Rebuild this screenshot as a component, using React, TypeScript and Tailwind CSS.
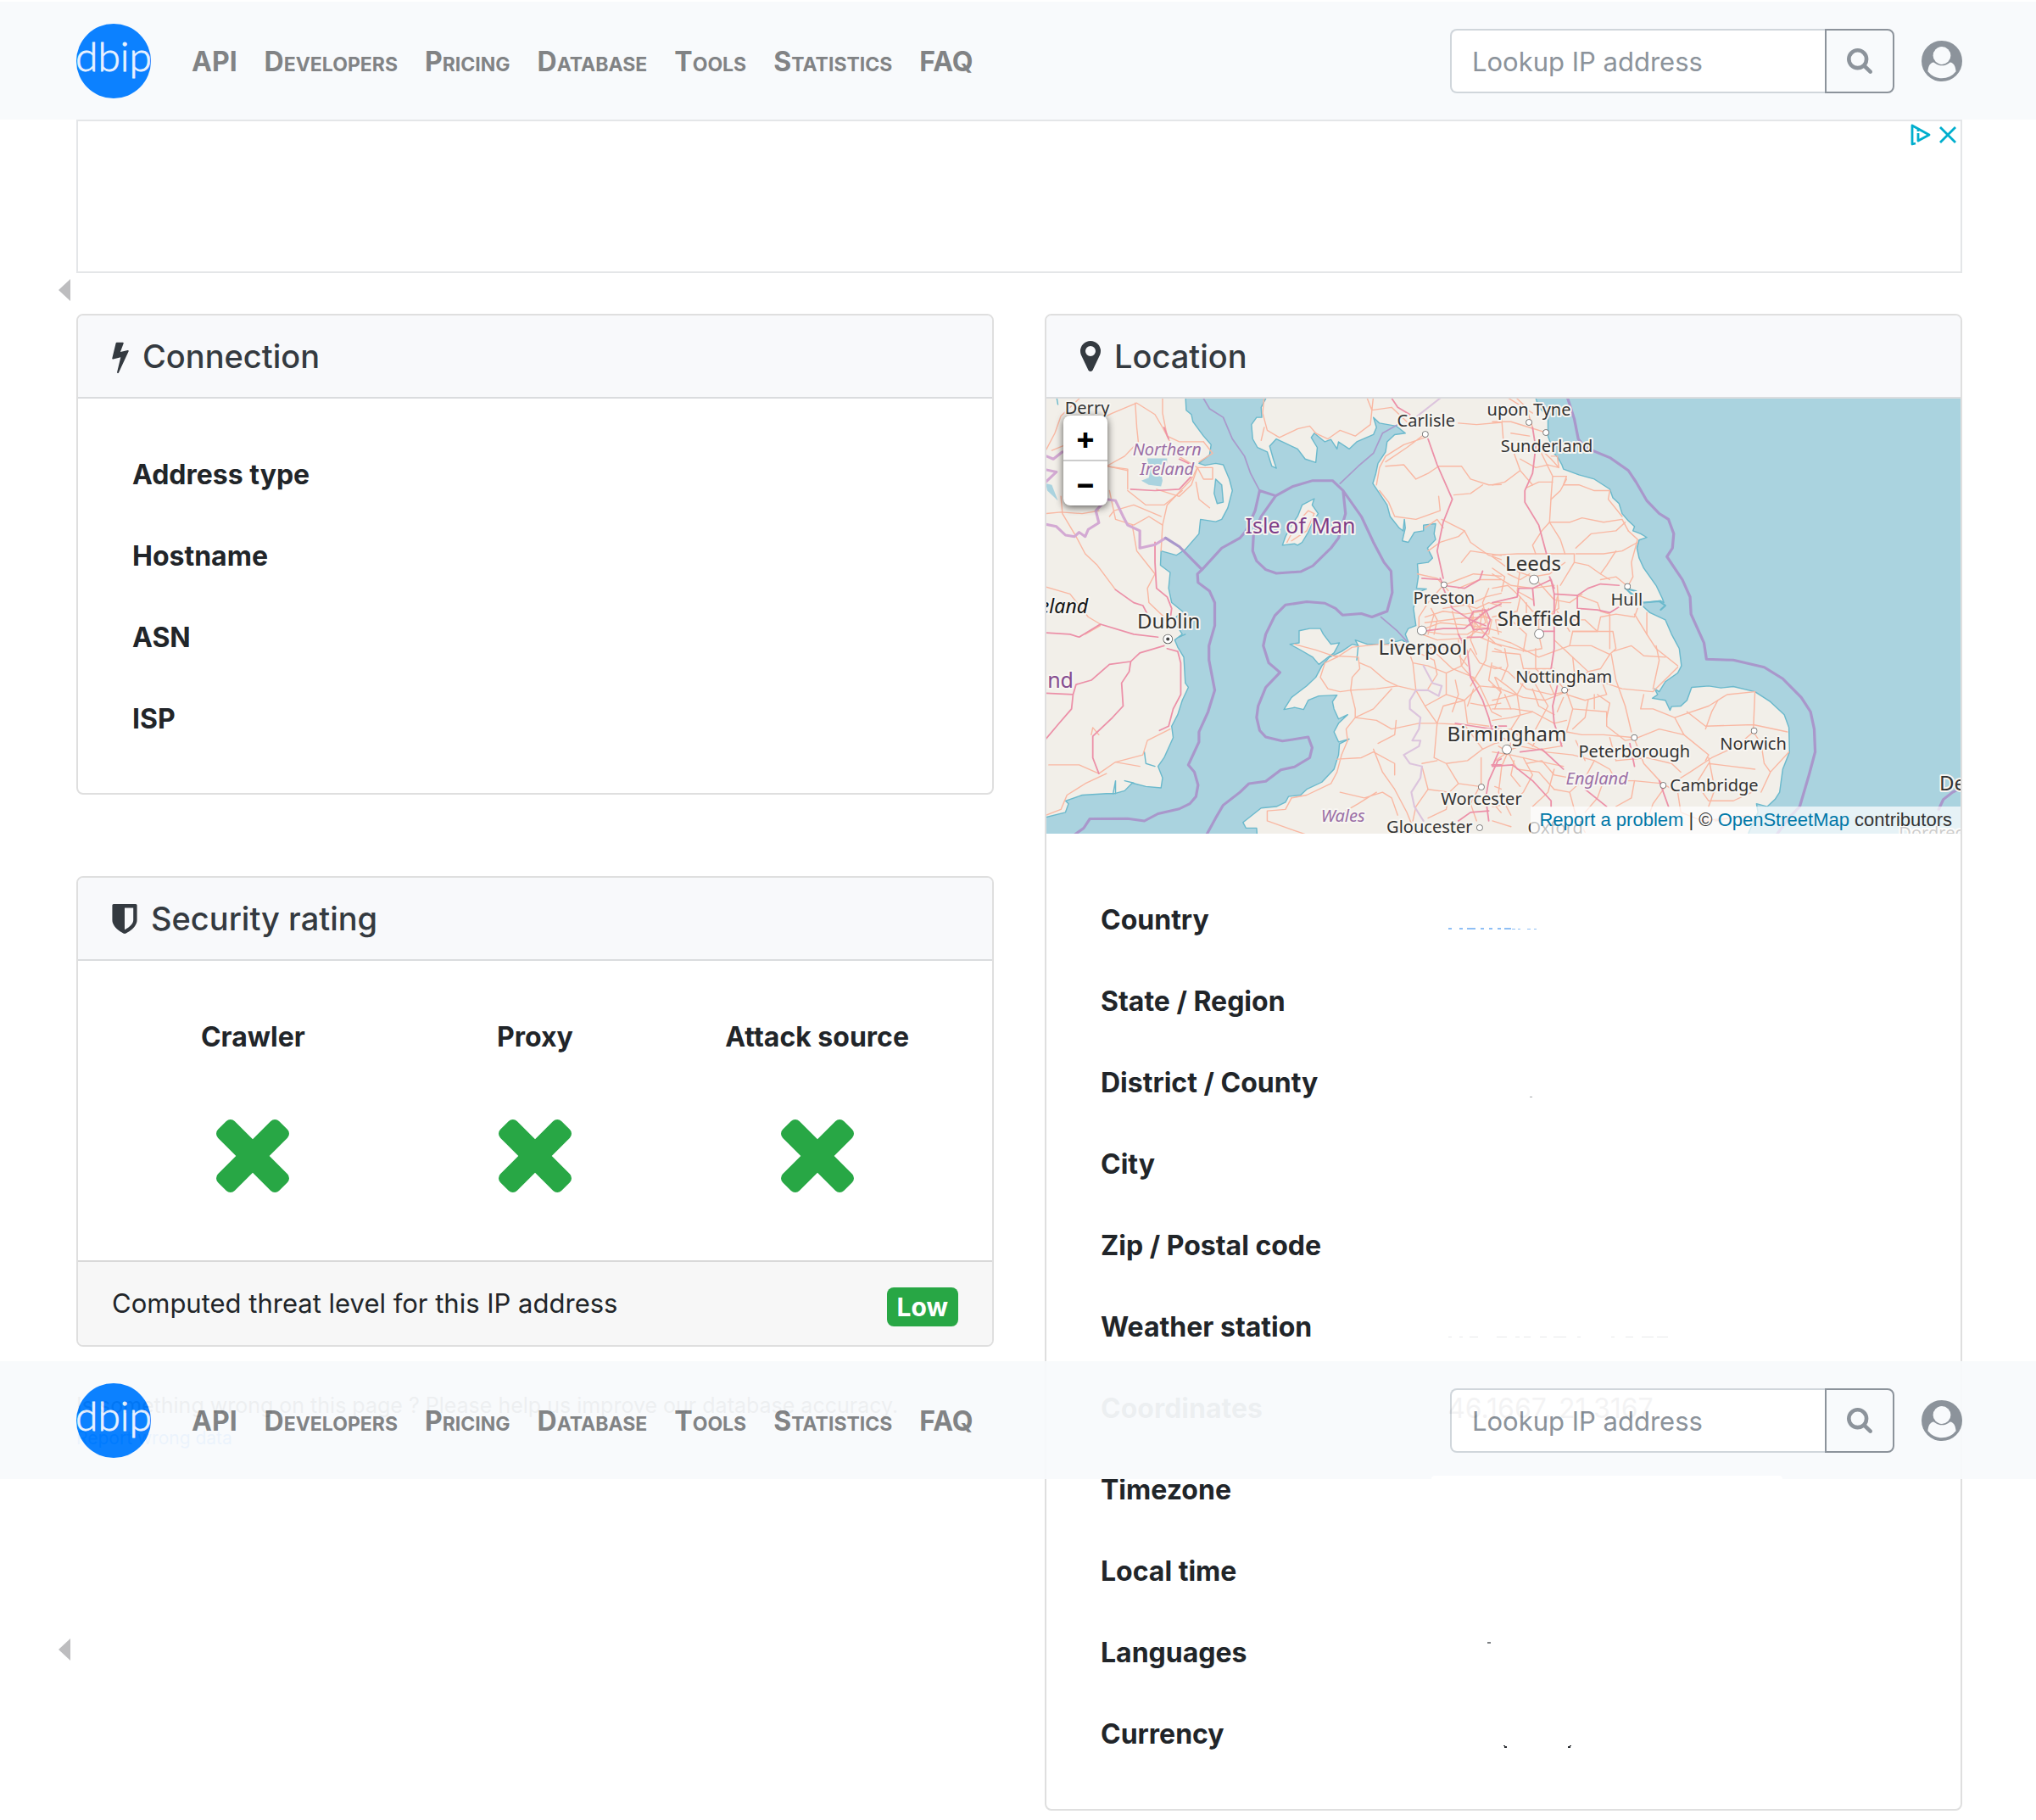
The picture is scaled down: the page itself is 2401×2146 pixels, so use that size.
import { ReactNode } from "react";

const navItems = ["API", "Developers", "Pricing", "Database", "Tools", "Statistics", "FAQ"];

const connectionRows = ["Address type", "Hostname", "ASN", "ISP"];

type Trace = { color: string; rects: number[][] };

// Leftovers of the masked values: [x, y, width, height] inside a 96px row
const traces: Record<string, Trace> = {
  Country: {
    color: "#8fbff5",
    rects: [[1, 57, 4, 2], [14, 57, 4, 2], [23, 57, 10, 2], [39, 57, 4, 2], [49, 57, 4, 2], [59, 57, 4, 2], [67, 57, 8, 2], [76, 58, 4, 1], [83, 58, 3, 1], [94, 58, 4, 1], [102, 58, 3, 1]],
  },
  "District / County": { color: "#a5a8ab", rects: [[97, 64, 3, 1]] },
  "Weather station": {
    color: "#e8e9ea",
    rects: [[1, 59, 4, 1], [14, 59, 4, 1], [26, 59, 10, 1], [58, 59, 12, 1], [80, 59, 5, 1], [90, 59, 8, 1], [109, 59, 8, 1], [125, 59, 15, 1], [153, 59, 4, 1], [193, 59, 4, 1], [210, 59, 9, 1], [229, 59, 14, 1], [247, 59, 13, 1]],
  },
  Languages: { color: "#7b7e82", rects: [[47, 35, 4, 2]] },
  Currency: { color: "#2b2f33", rects: [[66, 61, 2, 1], [67, 62, 3, 2], [144, 61, 2, 1], [142, 62, 3, 2]] },
};

const locationRows = [
  "Country",
  "State / Region",
  "District / County",
  "City",
  "Zip / Postal code",
  "Weather station",
  "Coordinates",
  "Timezone",
  "Local time",
  "Languages",
  "Currency",
];

function BoltIcon() {
  return (
    <svg viewBox="448 0 896 1792" className="h-[39px] w-[20px]" fill="currentColor" aria-hidden="true">
      <path d="M1333 566q18 20 7 44l-540 1157q-13 25-42 25-4 0-14-2-17-5-25.5-19t-4.5-30l197-808-406 101q-4 1-12 1-18 0-31-11-18-15-13-39l201-825q4-16 18-26t28-10h328q19 0 32 12.5t13 29.5q0 8-5 18l-171 463 396-98q8-2 12-2 19 0 34 15z" />
    </svg>
  );
}

function MarkerIcon() {
  return (
    <svg viewBox="384 128 1024 1536" className="h-[36px] w-[24px]" fill="currentColor" aria-hidden="true">
      <path d="M1152 640q0-106-75-181t-181-75-181 75-75 181 75 181 181 75 181-75 75-181zm256 0q0 109-33 179l-364 774q-16 33-47.5 52t-67.5 19-67.5-19-46.5-52l-365-774q-33-70-33-179 0-212 150-362t362-150 362 150 150 362z" />
    </svg>
  );
}

function ShieldIcon() {
  return (
    <svg viewBox="256 128 1280 1536" className="h-[35px] w-[30px]" fill="currentColor" aria-hidden="true">
      <path d="M1344 960v-640h-448v1137q119-63 213-137 235-184 235-360zm192-768v768q0 86-33.5 170.5t-83 150-118 127.5-126.5 103-121 77.5-89.5 49.5-42.5 20q-12 6-26 6t-26-6q-16-7-42.5-20t-89.5-49.5-121-77.5-126.5-103-118-127.5-83-150-33.5-170.5v-768q0-26 19-45t45-19h1152q26 0 45 19t19 45z" />
    </svg>
  );
}

function CrossIcon() {
  return (
    <svg viewBox="110 366 1188 1188" className="h-[86px] w-[86px] text-[#28a745]" fill="currentColor" role="img" aria-label="No">
      <path d="M1298 1322q0 40-28 68l-136 136q-28 28-68 28t-68-28l-294-294-294 294q-28 28-68 28t-68-28l-136-136q-28-28-28-68t28-68l294-294-294-294q-28-28-28-68t28-68l136-136q28-28 68-28t68 28l294 294 294-294q28-28 68-28t68 28l136 136q28 28 28 68t-28 68l-294 294 294 294q28 28 28 68z" />
    </svg>
  );
}

function SearchIcon() {
  return (
    <svg viewBox="0 128 1664 1664" className="h-[30px] w-[30px]" fill="currentColor" aria-hidden="true">
      <path d="M1152 832q0-185-131.5-316.5t-316.5-131.5-316.5 131.5-131.5 316.5 131.5 316.5 316.5 131.5 316.5-131.5 131.5-316.5zm512 832q0 52-38 90t-90 38q-54 0-90-38l-343-342q-179 124-399 124-143 0-273.5-55.5t-225-150-150-225-55.5-273.5 55.5-273.5 150-225 225-150 273.5-55.5 273.5 55.5 225 150 150 225 55.5 273.5q0 220-124 399l343 343q37 37 37 90z" />
    </svg>
  );
}

function Navbar({ id }: { id: string }) {
  return (
    <header className="flex h-[139px] items-center bg-[#f8fafc] pl-[90px] pr-[87px] opacity-95">
      <a href="#" aria-label="dbip">
        <svg viewBox="0 0 88 88" className="h-[88px] w-[88px]">
          <clipPath id={`logo-${id}`}>
            <circle cx="44" cy="44" r="44" />
          </clipPath>
          <g clipPath={`url(#logo-${id})`}>
            <rect width="88" height="88" fill="#007bff" />
            <text x="44" y="56" textAnchor="middle" fontFamily="Lato, sans-serif" fontWeight="300" fontSize="48" fill="#e8f2ff" stroke="#e8f2ff" strokeWidth="0.8">
              dbip
            </text>
          </g>
        </svg>
      </a>
      <nav className="ml-12 flex flex-1 items-baseline gap-8 pt-1.5 leading-[48px] font-bold text-[#7b7d7f]">
        {navItems.map((item) =>
          item === item.toUpperCase() ? (
            <a key={item} href="#" className="block text-[32px]">{item}</a>
          ) : (
            <a key={item} href="#" className="block text-[23px] uppercase first-letter:text-[32px]">{item}</a>
          )
        )}
      </nav>
      <form className="flex h-[76px] w-[524px]">
        <input
          type="text"
          aria-label="Lookup IP address"
          placeholder="Lookup IP address"
          className="min-w-0 flex-1 rounded-l-lg border-2 border-r-0 border-[#ced4da] bg-white px-6 pt-1 text-[31px] text-[#868e96] placeholder:text-[#868e96]"
        />
        <button type="submit" aria-label="Search" className="flex w-[82px] items-center justify-center rounded-r-lg border-2 border-[#868e96] text-[#868e96]">
          <SearchIcon />
        </button>
      </form>
      <a href="#" aria-label="Account" className="ml-8">
        <svg viewBox="0 0 48 48" className="h-12 w-12">
          <circle cx="24" cy="24" r="24" fill="#868e96" />
          <circle cx="24" cy="17.5" r="10.4" fill="#f8fafc" />
          <path d="M14.3 25.4Q24 33.2 33.7 25.4C37.8 26 40 29.5 40.6 36.2A21 21 0 0 1 7.4 36.2C8 29.5 10.2 26 14.3 25.4Z" fill="#f8fafc" />
        </svg>
      </a>
    </header>
  );
}

function CardTitle({ icon, children }: { icon: ReactNode; children: ReactNode }) {
  return (
    <div className="flex h-[98px] items-center gap-4 border-b-2 border-[#dadcde] bg-[#f8f9fb] px-10 text-[#343a40]">
      {icon}
      <h2 className="text-[38px] leading-[48px] font-medium">{children}</h2>
    </div>
  );
}

function InfoTable({ rows }: { rows: string[] }) {
  return (
    <table className="w-full table-fixed text-[32px] leading-[48px]">
      <tbody>
        {rows.map((row) => (
          <tr key={row} className="h-24">
            <th scope="row" className="w-[41%] px-6 text-left font-bold">{row}</th>
            <td className="p-0 pl-6">
              {row === "Coordinates" && "46.1667, 21.3167"}
              {traces[row] && (
                <svg viewBox="0 0 300 96" className="h-24 w-[300px]" fill={traces[row].color} aria-hidden="true">
                  {traces[row].rects.map(([x, y, w, h], i) => (
                    <rect key={i} x={x} y={y} width={w} height={h} />
                  ))}
                </svg>
              )}
            </td>
          </tr>
        ))}
      </tbody>
    </table>
  );
}

// Coast of Great Britain, western half and eastern half
const westCoast =
  "M775 10L750 60 752 95 735 95 718 120 722 170 738 200 770 215 785 265 800 272 790 240 778 195 800 170 830 185 870 205 895 240 930 252 935 200 915 165 925 150 960 180 980 172 1000 205 1005 180 1040 205 1065 180 1120 155 1130 130 1120 95 1140 115 1195 125 1225 150 1190 155 1165 180 1160 215 1135 255 1128 290 1118 325 1140 360 1165 400 1175 440 1205 480 1218 490 1222 450 1225 480 1215 525 1235 530 1255 495 1285 490 1285 470 1325 465 1320 500 1325 520 1298 550 1315 585 1300 600 1265 605 1268 650 1262 690 1295 692 1265 705 1252 760 1260 820 1235 830 1225 850 1240 890 1215 870 1160 885 1100 885 1060 870 1070 890 1050 885 1015 910 975 930 950 960 930 1000 900 1030 850 1070 825 1112 860 1105 890 1112 905 1080 940 1065 1000 1062 985 1085 990 1110 1005 1145 1035 1130 1005 1160 990 1190 1005 1225 1040 1215 1008 1232 1005 1270 990 1320 950 1365 900 1390 880 1410 840 1415 830 1435 800 1450 750 1455 690 1505 700 1525 735 1525 740 1600";
const eastCoast =
  "M135 10L150 60 180 90 180 160 200 220 212 235 225 260 230 275 280 295 330 310 380 345 390 375 410 395 420 430 440 455 460 475 455 490 480 500 500 513 475 522 468 550 475 585 490 620 530 680 550 725 555 740 545 733 490 740 430 690 480 745 510 775 560 800 580 850 605 900 612 960 600 985 560 1015 540 1050 525 1040 535 1060 518 1073 560 1080 575 1115 580 1102 610 1100 630 1080 645 1035 700 1030 740 1037 780 1032 850 1050 900 1085 945 1130 960 1175 962 1260 940 1320 930 1400 915 1425 890 1450 855 1440 860 1470 830 1540 820 1600";
const irishCoast =
  "M500 10L503 70 520 85 525 110 560 160 585 190 580 225 545 255 565 262 600 255 625 260 645 310 655 350 640 410 620 450 600 458 550 450 545 500 500 555 470 575 420 560 418 610 450 635 445 690 455 740 490 770 460 800 490 850 465 870 475 895 495 930 500 1020 510 1035 490 1080 475 1130 455 1170 460 1210 430 1280 410 1310 425 1350 420 1385 370 1380 325 1368 300 1395 265 1405 240 1405 160 1410 105 1430 115 1440 105 1470 30 1490";
const anglesey = "M875 838L910 830 945 830 955 850 980 885 1008 880 990 915 970 930 940 955 920 930 880 905 845 885 875 880Z";
const isleOfMan = "M925 378L918 400 938 430 920 460 905 495 885 530 870 540 860 535 820 540 830 510 850 470 870 440 885 400Z";

const westPrimary = [
  "M60 210L130 180 180 120 260 80 340 45 400 85 425 130 440 160 480 180 560 180",
  "M425 20L425 80 440 160 470 225 540 270 520 310 440 400 425 470 420 560",
  "M335 45L340 130 345 180 300 230 240 265 310 275 310 345",
  "M40 210L70 150 90 90 150 30",
  "M245 265L310 280M405 345L480 370 520 330 540 270 590 270 590 310 560 310 540 270",
  "M535 320L545 380 580 410",
  "M250 350L270 450 330 470 380 440 425 470M250 440L265 420 330 400 420 440M310 350L370 400 430 400 490 350",
  "M40 430L90 425 160 430 215 420M90 370L95 430 140 510 170 570 210 610 270 695",
  "M325 470L340 560 400 640 375 690 380 740 440 800",
  "M40 685L120 710 180 790 220 815M220 820L170 850",
  "M560 180L590 220 545 250",
  "M50 1305L150 1305 215 1335 270 1295 360 1270 375 1220 450 1180",
  "M40 1480L90 1460 110 1410 170 1370 240 1335M270 1295L350 1310M190 1200L195 1175 215 1200",
  "M760 20L755 80 770 140 810 165 870 135 910 125 930 150M760 130L750 175",
  "M930 150L970 170 1010 140 1060 160 1110 120 1115 70 1100 30M1115 70L1180 60 1230 110M1120 20L1115 70",
  "M1290 165L1220 190 1160 230 1140 270 1130 330M1280 160L1230 200 1160 250M1160 265L1220 260 1260 310 1300 290 1335 265",
  "M1335 265L1410 265 1440 310 1500 330 1568 328M1385 365L1440 360 1480 330M1400 115L1460 120 1568 110",
  "M1140 350L1170 390 1190 440 1260 450 1340 420 1335 370M1345 450L1420 490 1440 530 1500 575 1568 600",
  "M1300 560L1340 530 1400 510 1420 490M1350 480L1330 450 1290 480",
  "M1265 640L1330 655 1350 680 1400 660 1450 640 1568 650M1350 680L1300 740 1270 790 1270 830",
  "M1400 690L1470 660 1540 660M1360 690L1400 740 1460 760 1500 740 1568 760M1410 600L1440 560 1568 580",
  "M1290 790L1350 770 1420 780 1480 770 1490 810 1430 850 1350 850 1290 840M1290 830L1340 810 1440 820 1500 830 1568 850",
  "M1460 800L1500 760M1440 790L1480 840 1520 880M1480 760L1470 830 1410 880M1320 780L1300 850M1380 770L1400 850M1500 690L1480 740 1500 830",
  "M860 885L930 905 1000 930 1050 895 1140 885 1230 890M985 925L1070 930 1075 970 1050 1000 1045 1045",
  "M1000 930L960 950 945 1000 970 1040 1010 1050 1045 1045M1045 1045L1130 1040 1200 1030 1260 1045M1075 950L1110 965 1160 1010 1200 1030",
  "M1045 1045L1060 1110 1060 1140 1130 1150 1180 1180 1270 1160M1060 1140L1030 1180 1035 1220M1180 1040L1120 1110 1060 1140",
  "M1035 1220L1015 1270 1000 1330 980 1370 900 1410 850 1420M1000 1285L1080 1280 1120 1260 1190 1300 1190 1340",
  "M1120 1250L1150 1330 1190 1390 1230 1470 1260 1548M1135 1230L1190 1200 1195 1150",
  "M850 1420L830 1460 770 1465 770 1500 850 1530 900 1548M1010 1400L1090 1420 1150 1400 1180 1420 1200 1480M1020 1470L1070 1440 1130 1400",
  "M1230 890L1250 950 1300 960 1360 985 1410 960 1440 900M1250 950L1260 1045 1290 1100 1330 1160M1360 985L1360 1060 1290 1100",
  "M1440 900L1470 950 1520 970 1568 960M1400 870L1410 960 1470 1030 1568 1040M1330 920L1380 970 1450 1000 1470 1030M1500 860L1490 940 1440 1030",
  "M1360 1060L1420 1080 1470 1030M1330 1160L1350 1100 1420 1080 1430 1160 1500 1170M1270 1160L1330 1160 1420 1165M1470 1030L1510 1120 1568 1150",
  "M1330 1160L1320 1280 1360 1300 1430 1290 1480 1250M1360 1300L1400 1370 1470 1380M1280 1300L1330 1290M1280 1310L1300 1390 1370 1400 1400 1370",
  "M1300 1390L1260 1450 1250 1500M1470 1380L1440 1440 1460 1500M1475 1280L1475 1380M1480 1250L1520 1230 1568 1220M1420 1165L1480 1250",
  "M1370 1400L1360 1460 1300 1490M1520 1380L1568 1400M1500 1420L1540 1470 1568 1480M1520 900L1568 920M1510 950L1500 1010 1568 1080",
  "M1310 760L1330 800 1320 850M1350 760L1440 745 1490 720 1568 700M1290 810L1400 795 1500 790M1280 850L1330 870 1400 865 1470 860 1560 900",
  "M1445 770L1455 820 1440 870 1460 920M1470 780L1510 800 1500 850 1450 840 1445 790M1420 730L1450 780M1300 900L1340 890 1390 910 1430 960",
  "M1280 920L1320 940 1330 990 1300 1040M1390 1010L1400 1060 1380 1120M1440 1090L1490 1100 1540 1090M1450 1040L1430 1100M1520 1000L1540 1050 1520 1110",
];

const westMotorway = [
  "M1180 28L1200 60 1240 85M1300 170L1330 260 1380 380 1350 460 1330 560 1350 655",
  "M1280 655L1340 660M1350 680L1420 690 1470 660 1480 630M1350 690L1380 760 1440 800 1490 820",
  "M1280 840L1350 830 1420 830 1490 770 1568 730M1400 850L1430 910 1440 1000 1480 1080 1500 1140 1510 1180",
  "M1510 1180L1450 1170 1390 1160M1510 1180L1568 1180M1568 1270L1530 1290 1500 1360 1490 1420 1500 1500",
  "M1400 1500L1440 1470 1500 1465M1430 860L1480 860 1500 830M1435 800L1450 770 1490 765 1505 800 1495 830 1450 835 1435 800",
  "M320 345L400 350 480 345 520 300 510 255 480 240",
  "M400 530L400 600 405 690 440 720 455 760 450 800",
  "M410 860L330 850 220 815 150 860 120 850 40 845M270 695L330 740 360 750 380 790",
  "M430 890L350 915 320 945 250 955 190 1010 140 1025 130 1060 40 1055M130 1060L125 1110 80 1165 40 1215",
  "M320 945L315 980 290 1020 295 1100 260 1140 195 1205 195 1280 215 1335",
  "M440 900L475 910 485 950 485 1060 460 1110 445 1170 415 1185",
  "M430 130L445 170M1510 1305L1568 1305M1340 655L1350 680",
];

const eastPrimary = [
  "M30 100L35 170 70 220 90 280 130 330M70 220L140 190M90 280L40 320 0 330M40 20L130 80M70 20L110 60 130 130",
  "M0 110L60 110 120 130 180 150M60 150L120 160M140 190L190 240 215 270 210 230 190 230M90 240L140 270 180 260 215 270",
  "M145 190L195 300 190 370 185 460 160 490 130 540 140 570M195 300L240 300 230 330 280 330 330 350 380 350 375 380 420 440",
  "M195 320L150 320 110 340M240 310L220 350 190 380M185 460L250 460 290 445 360 460 420 450 440 490",
  "M185 460L220 520 235 570M270 550L320 500 400 490 430 460M440 490L470 520 450 600 455 650 440 680",
  "M270 570L360 570 420 560 470 530M0 575L80 570 160 570 265 570 265 600 220 680M265 600L310 610 350 640 380 660",
  "M350 640L370 610 400 560M350 660L400 650 440 685M0 580L50 620 130 650 185 640 235 600",
  "M0 640L60 680 130 690 200 680M0 690L50 680 90 720 80 770 0 790M90 720L130 770 200 780 210 720",
  "M90 620L80 700 130 730M150 670L200 730 250 740 290 710M210 680L215 760 150 800 150 850M0 740L60 740",
  "M280 715L340 740 350 770 380 780 380 900M470 760L460 790 400 780 350 790 340 840 260 840M500 775L500 850 530 900 600 960",
  "M460 780L500 850M260 840L390 840 400 900 380 920M150 850L160 900 110 910 0 880M390 910L450 890 490 925 560 930",
  "M0 860L60 880 150 930 250 890 320 890 380 920 350 970 310 980 260 930M0 910L90 920 100 970 200 970",
  "M385 920L400 1010 430 1100 450 1190M310 980L340 1010 420 1040 520 1050 600 965M530 890L540 940 520 1040",
  "M0 960L50 980 110 1040 190 1060 240 1050M0 1030L100 1070 170 1080 240 1050 310 980M0 1080L80 1060 120 980",
  "M240 1060L300 1080 370 1060 350 1000M200 1000L240 1050 260 1110 370 1120 370 1170 430 1220 460 1215",
  "M0 1110L70 1110 130 1120 200 1160 240 1150M80 1060L90 1130 60 1180 0 1190M110 970L180 1100 140 1180",
  "M260 1110L240 1190 290 1200 360 1200 460 1210M240 1190L220 1240 160 1250M340 1060L380 1090 370 1140",
  "M490 1060L480 1110 520 1110 590 1140 620 1200 540 1180 470 1210M590 1140L700 1100 760 1060 850 1050",
  "M850 1050L845 1180M690 1180L710 1120 730 1080M630 1120L690 1170 845 1165 955 1190M620 1200L700 1270 690 1290",
  "M845 1190L790 1240 710 1280 640 1330 580 1370M845 1190L870 1230 880 1300 900 1330M960 1260L900 1330 870 1400",
  "M460 1215L490 1300 550 1370M550 1370L460 1360 400 1360 380 1320 330 1290M610 1330L580 1300 500 1280 400 1290",
  "M550 1370L600 1400 660 1370 700 1300 850 1320M660 1370L700 1430 780 1430 840 1400M700 1280L720 1390 700 1450",
  "M0 1260L60 1270 140 1290 230 1310M50 1260L30 1310 20 1400 60 1480M50 1260L80 1320 150 1330 200 1390",
  "M60 1180L100 1220 170 1260M100 1280L130 1340 100 1400 60 1440 0 1450M170 1260L260 1270 330 1290 300 1350",
  "M200 1390L250 1400 300 1350M200 1320L180 1400 130 1450M250 1400L270 1480 300 1540M360 1360L340 1420 300 1470M460 1360L450 1420 400 1450",
  "M600 1400L610 1470 680 1500 760 1490M560 1380L520 1440 500 1500M0 1500L60 1520M720 1500L830 1480",
  "M20 850L10 800 60 800M60 800L110 850 100 910M260 840L250 890M210 770L250 840M130 1120L60 1140 0 1150M10 1000L60 1040 80 1060",
  "M200 870L260 930 270 1030M310 1080L300 1140 260 1180M330 1060L330 1110",
  "M20 1200L60 1230 50 1260 10 1290M50 1260L20 1240M50 1255L90 1240 140 1250M70 1290L60 1340 90 1380M110 1300L160 1290 200 1340 250 1350",
  "M40 900L50 960 30 1010M140 900L140 970 180 1010 200 1060M40 1060L60 1110M130 1040L150 1100 200 1130M180 770L230 800 300 800 340 840",
  "M0 620L40 650 30 700M50 640L90 660 120 640M110 740L110 800M230 1070L210 1120M150 1200L130 1240M270 1220L300 1290M380 1210L400 1290",
];

const eastMotorway = [
  "M130 130L140 200 130 290 105 350 105 390 150 470 175 570",
  "M0 740L80 720 85 690 130 690 190 660 200 710 275 715 310 690 350 675 410 680",
  "M130 690L135 750M275 715L275 760 340 765 380 775 410 755M200 710L200 830 200 900 190 970",
  "M165 840L200 840M210 1030L195 1100 200 1160 225 1240M0 1170L45 1170M90 1260L160 1250 190 1280 230 1320",
  "M0 1310L65 1305 130 1360 190 1430 190 1450M20 1260L0 1310M300 1390L370 1450M445 1230L460 1310M540 1360L570 1450M185 650L200 690",
];

const territorial =
  "M745 350L730 420 700 490 680 515 620 550 555 625 540 640 542 670 580 700 597 740 597 820 578 890 578 940 597 1045 575 1120 545 1190 545 1225 510 1305 530 1330 542 1375 535 1415 515 1440 480 1458 410 1475 365 1500 310 1492 185 1493 165 1525 135 1548M745 350L798 368 855 335 920 315 985 315 1020 350 1080 440 1120 530 1155 600 1178 630 1182 705 1165 770 1115 790 1080 778 1018 783 995 760 960 742 900 737 830 748 795 785 765 850 757 890 775 950 812 983 765 1035 740 1100 735 1140 745 1185 765 1208 820 1222 905 1208 918 1245 910 1280 860 1312 815 1322 765 1362 710 1370 680 1400 625 1445 600 1490 570 1548M798 368L750 440 725 500 722 560 735 595 765 625 800 638 880 632 920 612 980 550 1005 515 1028 430 1020 350M435 515L480 545 555 625";
const eastTerritorial =
  "M238 10L265 100 278 170 300 200 380 235 440 280 465 320 500 385 540 430 570 450 587 500 583 550 565 580 615 660 640 720 643 780 685 880 693 937 780 940 880 965 940 1005 1000 1070 1030 1120 1042 1180 1045 1260 1025 1340 995 1450 960 1490 920 1548M1445 1460L1460 1425 1490 1400 1530 1380";

type Place = { name: string; x: number; y: number; size: number; dot?: [number, number, number] };

const places: Place[] = [
  { name: "Derry", x: 49, y: 18, size: 20 },
  { name: "Carlisle", x: 448, y: 33, size: 20, dot: [447, 42, 3] },
  { name: "upon Tyne", x: 569, y: 20, size: 20, dot: [569, 28, 3] },
  { name: "Sunderland", x: 590, y: 63, size: 20, dot: [589, 40, 3] },
  { name: "Leeds", x: 574, y: 203, size: 24, dot: [575, 213, 5] },
  { name: "Preston", x: 469, y: 242, size: 20, dot: [469, 219, 3] },
  { name: "Hull", x: 684, y: 244, size: 20, dot: [685, 221, 3] },
  { name: "Sheffield", x: 581, y: 267, size: 24, dot: [581, 277, 5] },
  { name: "Liverpool", x: 444, y: 301, size: 24, dot: [443, 273, 5] },
  { name: "Nottingham", x: 610, y: 334, size: 20, dot: [611, 343, 3] },
  { name: "Dublin", x: 145, y: 270, size: 24 },
  { name: "Birmingham", x: 543, y: 403, size: 24, dot: [543, 413, 5] },
  { name: "Peterborough", x: 693, y: 422, size: 20, dot: [693, 399, 3] },
  { name: "Norwich", x: 833, y: 413, size: 20, dot: [834, 391, 3] },
  { name: "Worcester", x: 513, y: 478, size: 20, dot: [513, 457, 3] },
  { name: "Cambridge", x: 787, y: 462, size: 20, dot: [727, 455, 3] },
  { name: "Gloucester", x: 452, y: 511, size: 20, dot: [511, 505, 3] },
  { name: "Oxford", x: 600, y: 512, size: 20 },
];

function RegionMap() {
  return (
    <svg viewBox="0 0 1078 512" preserveAspectRatio="xMidYMid slice" className="h-full w-full" role="img" aria-label="Map of the Irish Sea and England">
      <rect width="1078" height="512" fill="#aad3df" />
      <g transform="translate(-14 -10) scale(.3571 .338)" fill="none" strokeLinejoin="round" strokeLinecap="round">
        <path d={westCoast + "L1568 1600 1568 10Z"} fill="#f2efe9" />
        <path d={irishCoast + "L30 10Z"} fill="#f2efe9" />
        <g stroke="#6bb9cc" strokeWidth="4">
          <path d={westCoast} />
          <path d={irishCoast} />
          <path d={anglesey} fill="#f2efe9" />
          <path d={isleOfMan} fill="#f2efe9" />
          <path d="M75 20L80 50M330 1368L300 1360M270 1405L270 1360 262 1405M365 1260L370 1300 400 1310M1070 890L1065 940M480 860L500 850" />
        </g>
        <path d="M600 310L620 330 625 390 605 395 595 360Z" fill="#aad3df" stroke="#6bb9cc" strokeWidth="4" />
        <path d="M375 238L440 238 440 255 415 260 425 315 420 335 380 330 355 315 380 305ZM40 325L60 330 80 385 45 350Z" fill="#aad3df" />
        <g stroke="#f9b8a3" strokeWidth="4">
          {westPrimary.map((d) => (
            <path key={d} d={d} />
          ))}
          <path d="M835 530L870 460 905 420 925 430 900 490 850 525" />
        </g>
        <g stroke="#ec90a8" strokeWidth="5">
          {westMotorway.map((d) => (
            <path key={d} d={d} />
          ))}
        </g>
        <path
          d="M30 465L75 475 105 505 135 510 150 495 170 510 180 485 215 462 205 420 240 380 270 385 295 440 310 470 350 490 350 550 400 538 435 515M30 225L65 240 95 215M30 275L75 285 40 320"
          stroke="#d3a9d3"
          strokeWidth="9"
        />
        <path
          d="M1285 960L1315 1020 1345 1030 1335 1065 1300 1045 1260 1045 1240 1080 1240 1110 1275 1140 1270 1180 1248 1220 1275 1220 1270 1240 1220 1270 1240 1300 1280 1310 1275 1350 1245 1400 1255 1450 1285 1500M1340 28L1265 90"
          stroke="#dcc4dd"
          strokeWidth="6"
        />
        <path d="M555 20L580 65 625 95 655 170 695 230 715 290 745 350M1010 325L1070 265 1120 220 1150 150 1200 120M1145 790L1200 840 1230 875" stroke="#a99acb" strokeWidth="5" />
        <path d={territorial} stroke="#a997cb" strokeWidth="9" />
      </g>
      <g transform="translate(526 -10) scale(.3635 .338)" fill="none" strokeLinejoin="round" strokeLinecap="round">
        <path d={eastCoast + "L30 1600 30 10Z"} fill="#f2efe9" />
        <path d={eastCoast} stroke="#6bb9cc" strokeWidth="4" />
        <path d="M430 690L465 700M490 740L540 735 560 750 545 765" stroke="#6bb9cc" strokeWidth="6" />
        <g stroke="#f9b8a3" strokeWidth="4">
          {eastPrimary.map((d) => (
            <path key={d} d={d} />
          ))}
        </g>
        <g stroke="#ec90a8" strokeWidth="5">
          {eastMotorway.map((d) => (
            <path key={d} d={d} />
          ))}
        </g>
        <path d={eastTerritorial} stroke="#a997cb" strokeWidth="9" />
      </g>
      <g fontFamily="'Noto Sans', sans-serif" stroke="#f7f5f1" strokeWidth="4" strokeLinejoin="round" paintOrder="stroke" textAnchor="middle">
        {places.map(({ name, x, y, size, dot }) => (
          <g key={name}>
            {dot && <circle cx={dot[0]} cy={dot[1]} r={dot[2]} fill="#fff" stroke="#666" strokeWidth="1.5" />}
            <text x={x} y={y} fontSize={size} fill="#333">{name}</text>
          </g>
        ))}
        <circle cx="144" cy="283" r="5" fill="#fff" stroke="#555" strokeWidth="1.5" />
        <circle cx="144" cy="283" r="2" fill="#444" stroke="none" />
        <text x="1052" y="461" fontSize="24" textAnchor="start" fill="#333">Den Haag</text>
        <text x="1052" y="518" fontSize="20" textAnchor="middle" fill="#555">Dordrecht</text>
        <text x="50" y="253" fontSize="23" fontStyle="italic" textAnchor="end" fill="#111">Ireland</text>
        <text x="33" y="340" fontSize="25" textAnchor="end" fill="#864c8f">Ireland</text>
        <text x="300" y="159" fontSize="25" fill="#7d3c87">Isle of Man</text>
        <g fontStyle="italic" fontSize="20" fill="#9b6fa6">
          <text x="143" y="67">Northern</text>
          <text x="143" y="90">Ireland</text>
          <text x="350" y="498">Wales</text>
          <text x="649" y="454">England</text>
        </g>
      </g>
    </svg>
  );
}

function Collapse({ className }: { className: string }) {
  return (
    <button type="button" aria-label="Collapse" className={className}>
      <svg viewBox="0 0 14 26" className="h-[26px] w-[14px]">
        <path d="M14 0V26L0 13Z" fill="#bdbdbf" />
      </svg>
    </button>
  );
}

export default function App() {
  return (
    <div className="relative bg-white pt-0.5 pb-3 font-[Inter,'Liberation_Sans',sans-serif] text-[#212529]">
      <Navbar id="top" />

      <main className="pl-[90px] pr-[87px]">
        {/* Ad slot */}
        <div className="flex h-[181px] items-start justify-end gap-2.5 border-2 border-[#e4e6e8] px-[5px] py-[3px]">
          <button type="button" aria-label="AdChoices">
            <svg viewBox="0 0 24 26" className="h-[26px] w-[24px]" fill="none" stroke="#00aecd" strokeWidth="2.8" strokeLinejoin="round">
              <path d="M6 23L2 24V2L22 13 9 20V11" />
              <path d="M9 6.5V9" />
            </svg>
          </button>
          <button type="button" aria-label="Close ad">
            <svg viewBox="0 0 20 26" className="h-[26px] w-[20px]" stroke="#00aecd" strokeWidth="2.8">
              <path d="M1 4L19 22M19 4L1 22" />
            </svg>
          </button>
        </div>
        <Collapse className="absolute top-[329px] left-[69px]" />

        <div className="mt-12 grid grid-cols-2 items-start gap-[60px]">
          <div>
            <section className="overflow-hidden rounded-lg border-2 border-[#dfdfdf]">
              <CardTitle icon={<BoltIcon />}>Connection</CardTitle>
              <div className="px-10 pt-[42px] pb-[39px]">
                <InfoTable rows={connectionRows} />
              </div>
            </section>

            <section className="mt-24 overflow-hidden rounded-lg border-2 border-[#dfdfdf]">
              <CardTitle icon={<ShieldIcon />}>Security rating</CardTitle>
              <table className="mx-10 mt-[42px] mb-[39px] w-[calc(100%-80px)] table-fixed text-center text-[32px] leading-[48px]">
                <thead>
                  <tr className="h-24">
                    <th scope="col">Crawler</th>
                    <th scope="col">Proxy</th>
                    <th scope="col">Attack source</th>
                  </tr>
                </thead>
                <tbody>
                  <tr className="h-[176px]">
                    {["crawler", "proxy", "attack"].map((key) => (
                      <td key={key} className="pt-2">
                        <div className="flex justify-center">
                          <CrossIcon />
                        </div>
                      </td>
                    ))}
                  </tr>
                </tbody>
              </table>
              <div className="flex h-[100px] items-center justify-between border-t-2 border-[#d9d9d9] bg-[#f7f7f7] px-10 text-[31px] leading-[48px]">
                <span>Computed threat level for this IP address</span>
                <span className="mt-2 rounded-lg bg-[#28a745] px-3 text-[30px] leading-[46px] font-bold text-white">Low</span>
              </div>
            </section>

            <p className="mt-12 text-[25px] leading-[42px]">Is something wrong on this page ? Please help us improve our database accuracy.</p>
            <a href="#" className="block text-[21px] leading-[36px] text-[#007bff]">Report wrong data</a>
          </div>

          <section className="overflow-hidden rounded-lg border-2 border-[#dfdfdf]">
            <CardTitle icon={<MarkerIcon />}>Location</CardTitle>
            <div className="relative h-[513px] overflow-hidden">
              <RegionMap />
              <div className="absolute top-5 left-5 flex w-[52px] flex-col rounded-lg bg-white text-[36px] font-bold text-black shadow-[0_2px_10px_rgba(0,0,0,0.65)]">
                <button type="button" aria-label="Zoom in" className="h-[54px] border-b-2 border-[#ccc] leading-[52px]">+</button>
                <button type="button" aria-label="Zoom out" className="h-[52px] leading-[52px]">−</button>
              </div>
              <div className="absolute right-0 bottom-0 bg-white/70 px-2.5 font-['Liberation_Sans',sans-serif] text-[22px] leading-[32px] text-[#333]">
                <a href="#" className="text-[#0078a8]">Report a problem</a> | © <a href="#" className="text-[#0078a8]">OpenStreetMap</a> contributors
              </div>
            </div>
            <div className="px-10 pt-[54px] pb-10">
              <InfoTable rows={locationRows} />
            </div>
          </section>
        </div>
      </main>

      {/* Sticky bar as it rides over the lower part of the page */}
      <div className="absolute inset-x-0 top-[1605px]">
        <Navbar id="sticky" />
        <div className="absolute right-[299px] bottom-0 h-1 w-[414px] rounded-t bg-white" />
      </div>
      <Collapse className="absolute top-[1932px] left-[69px]" />
    </div>
  );
}
